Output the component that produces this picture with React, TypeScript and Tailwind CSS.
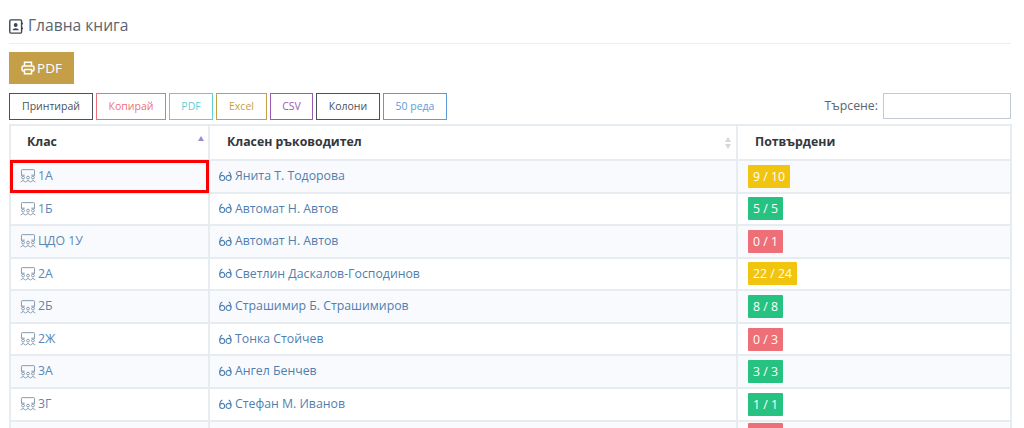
const font = { fontFamily: '"Open Sans", "Noto Sans", sans-serif' };

function ClassIcon() {
  return (
    <svg width="16" height="14" viewBox="0 0 17 15" fill="none" stroke="#7f95aa" strokeWidth="1" className="shrink-0">
      <path d="M1.5 7V1.5Q1.5 .7 2.3 .7H14.7Q15.5 .7 15.5 1.5V7" />
      <path d="M1 6.6H5M12 6.6H16" />
      <circle cx="3.2" cy="9.2" r="1.5" />
      <circle cx="8.5" cy="9.2" r="1.5" />
      <circle cx="13.8" cy="9.2" r="1.5" />
      <path d="M.6 14.2Q3.2 10.6 5.8 14.2M5.9 14.2Q8.5 10.6 11.1 14.2M11.2 14.2Q13.8 10.6 16.4 14.2" />
    </svg>
  );
}

function GlassesIcon() {
  return (
    <svg width="13" height="11" viewBox="0 0 15 12" fill="none" stroke="#4a7fb0" strokeWidth="1.2" className="shrink-0">
      <circle cx="3.7" cy="7.6" r="2.9" />
      <path d="M.8 7.4C.8 4 1.6 1.6 3.9 .8" />
      <circle cx="11" cy="7.6" r="2.9" />
      <path d="M13.9 7.4C13.9 4 13.4 1.8 11.2 .8" />
    </svg>
  );
}

const rows = [
  ["1А", "Янита Т. Тодорова", "9 / 10", "y"],
  ["1Б", "Автомат Н. Автов", "5 / 5", "g"],
  ["ЦДО 1У", "Автомат Н. Автов", "0 / 1", "r"],
  ["2А", "Светлин Даскалов-Господинов", "22 / 24", "y"],
  ["2Б", "Страшимир Б. Страшимиров", "8 / 8", "g"],
  ["2Ж", "Тонка Стойчев", "0 / 3", "r"],
  ["3А", "Ангел Бенчев", "3 / 3", "g"],
  ["3Г", "Стефан М. Иванов", "1 / 1", "g"],
  ["", "", "", "r"],
];

const buttons: [string, string][] = [
  ["Принтирай", "border-[#4b5158] text-[#4b5158] w-[84px]"],
  ["Копирай", "border-[#ef6f78] text-[#ef6f78] w-[70px]"],
  ["PDF", "border-[#5bd0d8] text-[#5bd0d8] w-[44px]"],
  ["Excel", "border-[#c49f47] text-[#c49f47] w-[51px]"],
  ["CSV", "border-[#9b59b6] text-[#9b59b6] w-[43px]"],
  ["Колони", "border-[#4b5158] text-[#4b5158] w-[64px]"],
  ["50 реда", "border-[#5c9bd8] text-[#5c9bd8] w-[64px]"],
];

export default function App() {
  return (
    <div style={font} className="h-[428px] w-[1024px] overflow-hidden bg-white text-[#4b5158]">
      <div className="pl-[9px] pr-[13px]">
        <div className="flex h-[44px] items-center gap-[5px] border-b border-[#eceef1] pt-[9px]">
          <svg width="14" height="15" viewBox="0 0 13 14" fill="none" stroke="#3e4650" strokeWidth="1.3">
            <rect x="0.7" y="0.8" width="11" height="12.4" rx="1" />
            <circle cx="6.2" cy="5.6" r="1.8" fill="#3e4650" stroke="none" />
            <path d="M3.2 10.4C3.6 7.9 8.8 7.9 9.2 10.4Z" fill="#3e4650" stroke="none" />
            <path d="M12.5 3.5V5M12.5 8V9.5" strokeWidth="1" />
          </svg>
          <span className="text-[15.6px] leading-none text-[#5a6570]">Главна книга</span>
        </div>
        <button className="mt-[8px] flex h-[32px] w-[65px] items-center justify-center gap-[2px] bg-[#c49f47] text-[13.5px] text-white">
          <svg width="14" height="14" viewBox="0 0 14 14" fill="none" stroke="white" strokeWidth="1.5">
            <path d="M3.5 5V1.2H10.5V5" />
            <rect x="1" y="5" width="12" height="5" rx="1.5" />
            <rect x="3.5" y="8.5" width="7" height="4.3" fill="#c49f47" />
          </svg>
          PDF
        </button>
        <div className="mt-[9px] flex h-[31px] items-start justify-between">
          <div className="flex gap-[3px]">
            {buttons.map(([label, cls]) => (
              <button key={label} className={"h-[27px] border text-[10.5px] " + cls}>
                {label}
              </button>
            ))}
          </div>
          <div className="flex items-center gap-[5px]">
            <span className="text-[12.3px] text-[#5a6570]">Търсене:</span>
            <input className="h-[26px] w-[128px] border border-[#c2cad8] bg-white" />
          </div>
        </div>
      </div>
      <table className="ml-[9px] w-[1003px] table-fixed border-collapse border-2 border-[#e7ecf1] text-[12.3px]">
        <colgroup>
          <col className="w-[199px]" />
          <col className="w-[528px]" />
          <col />
        </colgroup>
        <thead>
          <tr className="h-[35px] text-left">
            <th className="relative border-2 border-[#e7ecf1] pl-[16px] font-bold text-[#34373c]">
              Клас
              <span className="absolute right-[4px] top-[10px] h-0 w-0 border-x-[3.5px] border-b-[5px] border-x-transparent border-b-[#8f8fd8]" />
            </th>
            <th className="relative border-2 border-[#e7ecf1] pl-[17px] font-bold text-[#34373c]">
              Класен ръководител
              <span className="absolute right-[5px] top-[11px] h-0 w-0 border-x-[3.5px] border-b-[5px] border-x-transparent border-b-[#d5d8dc]" />
              <span className="absolute right-[5px] top-[18px] h-0 w-0 border-x-[3.5px] border-t-[5px] border-x-transparent border-t-[#d5d8dc]" />
            </th>
            <th className="border-2 border-[#e7ecf1] pl-[17px] font-bold text-[#34373c]">Потвърдени</th>
          </tr>
        </thead>
        <tbody>
          {rows.map(([cls, teacher, count, tone], i) => (
            <tr key={i} className={"h-[32.57px] " + (i % 2 === 0 ? "bg-[#f9fafd]" : "bg-white")}>
              <td className={"relative border-2 border-[#e7ecf1] pl-[9px] " + (i === 0 ? "outline-[3px] -outline-offset-[3px] outline-[#ff0000]" : "")}>
                <span className="flex items-center gap-[2px] text-[#5b87b5]">
                  {i < 8 && <ClassIcon />}
                  {cls}
                </span>
              </td>
              <td className="border-2 border-[#e7ecf1] pl-[9px]">
                <span className="flex items-center gap-[3px] text-[#4f7fb0]">
                  {i < 8 && <GlassesIcon />}
                  {teacher}
                </span>
              </td>
              <td className="border-2 border-[#e7ecf1] pl-[10px]">
                <span
                  className={
                    "inline-block h-[23px] min-w-[35px] rounded-[1px] px-[5px] text-center text-[12.3px] leading-[23px] text-white " +
                    (tone === "y" ? "bg-[#f1c40f]" : tone === "g" ? "bg-[#26c281]" : "bg-[#ef6f78]")
                  }
                >
                  {count}
                </span>
              </td>
            </tr>
          ))}
        </tbody>
      </table>
    </div>
  );
}
